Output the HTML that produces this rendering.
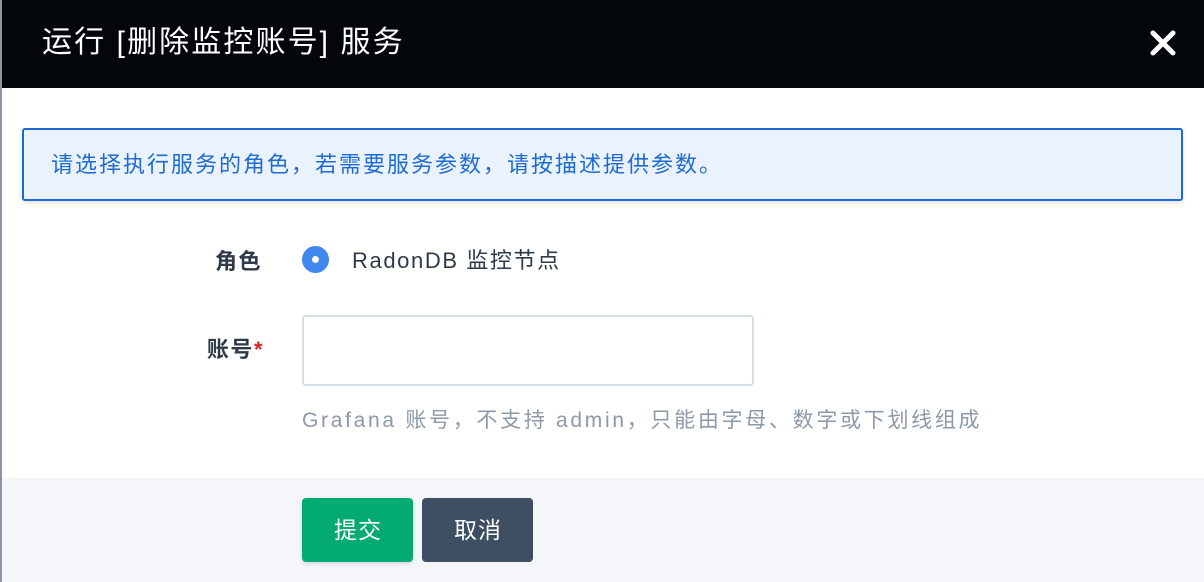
<!DOCTYPE html>
<html><head><meta charset="utf-8"><style>
*{margin:0;padding:0;box-sizing:border-box}
body{width:1204px;height:582px;overflow:hidden;background:#fff;font-family:"Liberation Sans","Noto Sans CJK SC",sans-serif;position:relative}
.edge{position:absolute;left:0;top:0;width:2px;height:582px;background:#8a96a6}
.hd{position:absolute;left:2px;top:0;right:0;height:88px;background:#03060a;color:#fff}
.hd .t{position:absolute;left:40px;top:22px;font-size:30px;line-height:42px;letter-spacing:2.1px}
.x{position:absolute;left:1146px;top:28px;width:30px;height:30px}
.alert{position:absolute;left:22px;top:128px;width:1161px;height:73px;border:2px solid #1a6bd6;border-radius:3px;background:#eaf2fd;color:#1d6bd3;font-size:22px;line-height:69px;padding-left:27px;box-shadow:0 2px 4px rgba(0,0,0,.12);letter-spacing:2px}
.lbl{position:absolute;right:941px;font-size:22px;font-weight:bold;color:#2f3a48;letter-spacing:1.5px}
.radio{position:absolute;left:302px;top:246px;width:27px;height:27px;border-radius:50%;background:#3d87ef}
.radio:after{content:"";position:absolute;left:10px;top:10px;width:7px;height:7px;border-radius:50%;background:#fff}
.rt{position:absolute;left:352px;top:243px;font-size:22px;color:#2f3a48;letter-spacing:1.6px}
.inp{position:absolute;left:302px;top:315px;width:452px;height:71px;border:2px solid #d5dde6;border-radius:4px}
.hint{position:absolute;left:302px;top:404px;font-size:21px;color:#8e99a8;letter-spacing:2.7px}
.ft{position:absolute;left:2px;top:478px;right:0;bottom:0;background:#f4f6f9}
.btn{position:absolute;top:498px;width:111px;height:64px;border-radius:4px;color:#fff;font-size:23px;line-height:64px;text-align:center;letter-spacing:1px;text-indent:1px}
</style></head><body>
<div class="edge"></div>
<div class="hd"><div class="t">运行 [删除监控账号] 服务</div>
<svg class="x" viewBox="0 0 30 30"><path d="M5 5L25 25M25 5L5 25" stroke="#fff" stroke-width="5" stroke-linecap="round"/></svg></div>
<div class="alert">请选择执行服务的角色，若需要服务参数，请按描述提供参数。</div>
<div class="lbl" style="top:244px;right:942px">角色</div>
<div class="radio"></div>
<div class="rt">RadonDB 监控节点</div>
<div class="lbl" style="top:332px;right:940px">账号<span style="color:#d22">*</span></div>
<div class="inp"></div>
<div class="hint">Grafana 账号，不支持 admin，只能由字母、数字或下划线组成</div>
<div class="ft"></div>
<div class="btn" style="left:302px;background:#03ab72;box-shadow:0 2px 4px rgba(0,0,0,.12)">提交</div>
<div class="btn" style="left:422px;background:#3e4f63">取消</div>
</body></html>
